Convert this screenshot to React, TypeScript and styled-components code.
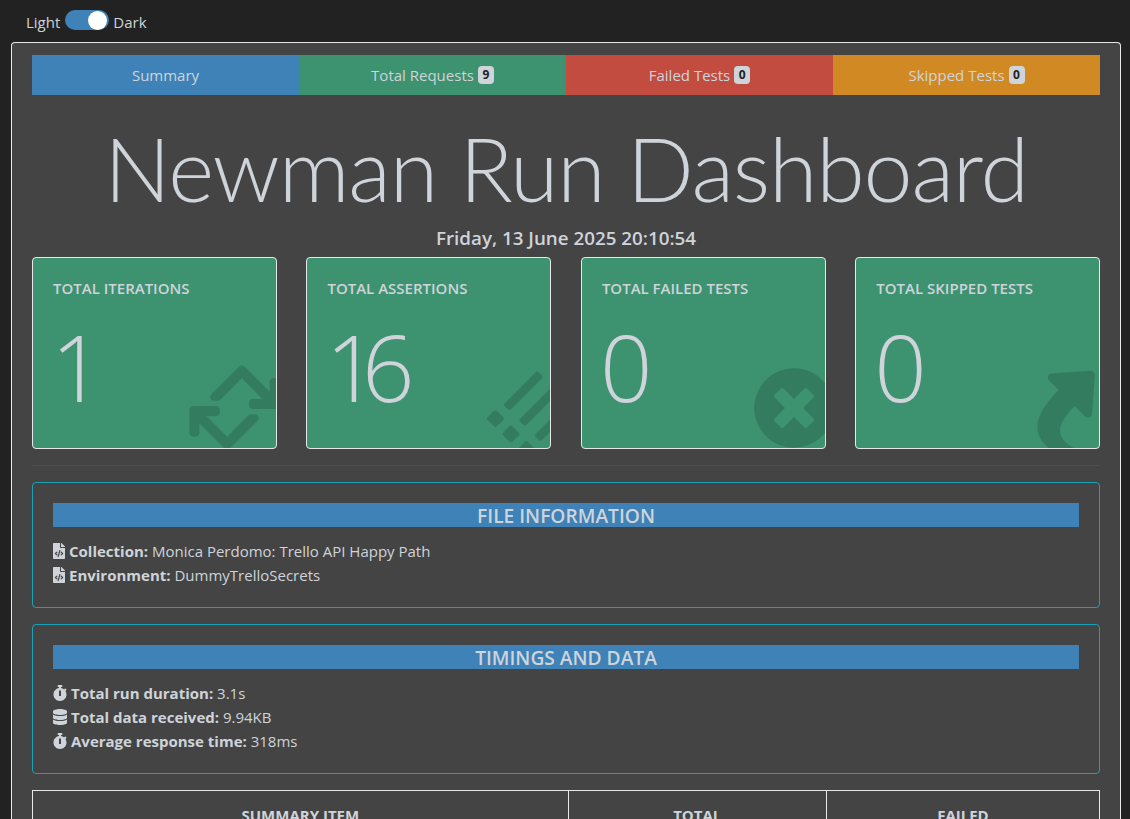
import { ReactNode } from "react";
import styled, { createGlobalStyle } from "styled-components";
import {
  FaDatabase,
  FaFileCode,
  FaList,
  FaRetweet,
  FaShare,
  FaStopwatch,
  FaTimesCircle,
} from "react-icons/fa";

const colors = {
  page: "#222222",
  panel: "#444444",
  text: "#ced4da",
  blue: "#3f82b7",
  green: "#3d9270",
  red: "#c34c41",
  orange: "#d18a23",
  teal: "#17a2b8",
};

const GlobalStyle = createGlobalStyle`
  html, body {
    margin: 0;
    height: 100%;
    overflow: hidden;
    background: ${colors.page};
    color: ${colors.text};
    font-family: "Open Sans", "Noto Sans", sans-serif;
    font-size: 15px;
  }
`;

const ThemeBar = styled.div`
  display: flex;
  align-items: center;
  gap: 5px;
  height: 42px;
  padding: 1px 0 0 26px;
  box-sizing: border-box;
`;

const ToggleTrack = styled.div`
  display: flex;
  justify-content: flex-end;
  align-items: center;
  width: 44px;
  height: 20px;
  margin: -3px -1px 0 0;
  border-radius: 10px;
  background: ${colors.blue};
  padding-right: 2px;
  box-sizing: border-box;
`;

const ToggleKnob = styled.span`
  width: 19px;
  height: 19px;
  border-radius: 50%;
  background: #ffffff;
`;

const Panel = styled.main`
  margin: 0 9px 0 11px;
  padding: 12px 20px 0;
  background: ${colors.panel};
  border: 1px solid #e8e8e8;
  border-bottom: 0;
  border-radius: 4px 4px 0 0;
`;

const Tabs = styled.nav`
  display: grid;
  grid-template-columns: repeat(4, 1fr);
  height: 40px;
`;

const Tab = styled.div<{ $bg: string }>`
  display: flex;
  align-items: center;
  justify-content: center;
  gap: 4px;
  background: ${(p) => p.$bg};
`;

const Badge = styled.span`
  min-width: 16px;
  height: 18px;
  line-height: 18px;
  border-radius: 4px;
  background: ${colors.text};
  color: #222;
  font-size: 12px;
  font-weight: 700;
  text-align: center;
`;

const Title = styled.h1`
  margin: 24px 0 0;
  font-family: Lato, "Open Sans", sans-serif;
  font-size: 88px;
  letter-spacing: -1.2px;
  line-height: 98px;
  height: 110px;
  font-weight: 300;
  text-align: center;
`;

const DateLine = styled.h5`
  margin: 0;
  height: 28px;
  font-size: 18.8px;
  line-height: 19px;
  font-weight: 600;
  text-align: center;
`;

const StatGrid = styled.section`
  display: grid;
  grid-template-columns: repeat(4, 244.65px);
  gap: 29.8px;
  padding-bottom: 16px;
  border-bottom: 1px solid #4d4d4d;
`;

const StatCard = styled.article`
  position: relative;
  height: 192px;
  box-sizing: border-box;
  padding: 21px 20px;
  background: ${colors.green};
  border: 1px solid #e8e8e8;
  border-radius: 4px;
  overflow: hidden;
`;

const StatLabel = styled.h6`
  margin: 0;
  font-size: 15px;
  line-height: 18px;
  font-weight: 600;
  text-transform: uppercase;
`;

const StatValue = styled.div`
  margin: 15px 0 0 -2px;
  font-size: 92px;
  letter-spacing: -16px;
  line-height: 110px;
  font-weight: 300;
`;

const StatIcon = styled.div<{ $right: number; $bottom: number; $size: number; $turn: number }>`
  position: absolute;
  display: flex;
  right: ${(p) => p.$right}px;
  bottom: ${(p) => p.$bottom}px;
  color: rgba(0, 0, 0, 0.15);
  font-size: ${(p) => p.$size}px;
  transform: rotate(${(p) => p.$turn}deg);
`;

const InfoBox = styled.section`
  margin-top: 16px;
  padding: 20px 20px 20px;
  border: 1px solid ${colors.teal};
  border-radius: 4px;
`;

const InfoHeading = styled.h5`
  margin: 0 0 12px;
  height: 24px;
  background: ${colors.blue};
  font-size: 19.2px;
  line-height: 26px;
  font-weight: 600;
  text-align: center;
`;

const InfoRow = styled.div<{ $gap: number }>`
  display: flex;
  align-items: center;
  gap: ${(p) => p.$gap}px;
  height: 24px;
  white-space: pre;

  svg {
    font-size: 16px;
    flex: none;
    margin-left: ${(p) => p.$gap - 4}px;
  }
  b {
    font-weight: 700;
  }
`;

const SummaryTable = styled.table`
  width: 100%;
  margin-top: 16px;
  border-collapse: collapse;
  table-layout: fixed;

  th {
    height: 48px;
    padding: 0;
    border: 1px solid #e8e8e8;
    font-size: 15px;
    font-weight: 700;
    text-transform: uppercase;
  }
`;

type Stat = { label: string; value: string; icon: ReactNode; right: number; bottom: number; size: number; turn: number };

const stats: Stat[] = [
  { label: "Total Iterations", value: "1", icon: <FaRetweet />, right: -10.5, bottom: -10.5, size: 103, turn: -45 },
  { label: "Total Assertions", value: "16", icon: <FaList />, right: -16, bottom: -1, size: 70, turn: -45 },
  { label: "Total Failed Tests", value: "0", icon: <FaTimesCircle />, right: -10, bottom: -1, size: 82, turn: 0 },
  { label: "Total Skipped Tests", value: "0", icon: <FaShare />, right: -13, bottom: -3, size: 86, turn: -45 },
];

export default function App() {
  return (
    <>
      <GlobalStyle />
      <ThemeBar>
        <span>Light</span>
        <ToggleTrack>
          <ToggleKnob />
        </ToggleTrack>
        <span>Dark</span>
      </ThemeBar>
      <Panel>
        <Tabs>
          <Tab $bg={colors.blue}>Summary</Tab>
          <Tab $bg={colors.green}>
            Total Requests <Badge>9</Badge>
          </Tab>
          <Tab $bg={colors.red}>
            Failed Tests <Badge>0</Badge>
          </Tab>
          <Tab $bg={colors.orange}>
            Skipped Tests <Badge>0</Badge>
          </Tab>
        </Tabs>
        <Title>Newman Run Dashboard</Title>
        <DateLine>Friday, 13 June 2025 20:10:54</DateLine>
        <StatGrid>
          {stats.map((s) => (
            <StatCard key={s.label}>
              <StatLabel>{s.label}</StatLabel>
              <StatValue>{s.value}</StatValue>
              <StatIcon $right={s.right} $bottom={s.bottom} $size={s.size} $turn={s.turn}>
                {s.icon}
              </StatIcon>
            </StatCard>
          ))}
        </StatGrid>
        <InfoBox>
          <InfoHeading>FILE INFORMATION</InfoHeading>
          <InfoRow $gap={2}>
            <FaFileCode />
            <span>
              <b>Collection:</b> Monica Perdomo: Trello API Happy Path
            </span>
          </InfoRow>
          <InfoRow $gap={2}>
            <FaFileCode />
            <span>
              <b>Environment:</b> DummyTrelloSecrets
            </span>
          </InfoRow>
        </InfoBox>
        <InfoBox>
          <InfoHeading>TIMINGS AND DATA</InfoHeading>
          <InfoRow $gap={3}>
            <FaStopwatch />
            <span>
              <b>Total run duration:</b> 3.1s
            </span>
          </InfoRow>
          <InfoRow $gap={3}>
            <FaDatabase />
            <span>
              <b>Total data received:</b> 9.94KB
            </span>
          </InfoRow>
          <InfoRow $gap={3}>
            <FaStopwatch />
            <span>
              <b>Average response time:</b> 318ms
            </span>
          </InfoRow>
        </InfoBox>
        <SummaryTable>
          <colgroup>
            <col style={{ width: "50.2%" }} />
            <col style={{ width: "24.2%" }} />
            <col style={{ width: "25.6%" }} />
          </colgroup>
          <thead>
            <tr>
              <th>Summary Item</th>
              <th>Total</th>
              <th>Failed</th>
            </tr>
          </thead>
        </SummaryTable>
      </Panel>
    </>
  );
}
